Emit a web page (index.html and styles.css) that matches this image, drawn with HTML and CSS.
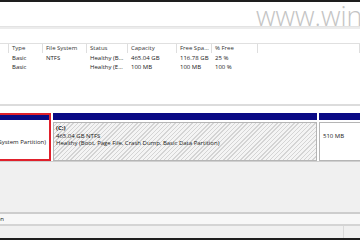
FILE: index.html
```html
<!DOCTYPE html>
<html lang="en">
<head>
    <meta charset="UTF-8">
    <title>Disk Management</title>
    <link rel="stylesheet" href="styles.css">
</head>
<body>
    <div class="topbar"></div>

    <div class="toolbar">
        <span class="watermark">www.windowscentral.com</span>
    </div>

    <div class="volumes">
        <div class="vol-row vol-head">
            <span></span>
            <span>Type</span>
            <span>File System</span>
            <span>Status</span>
            <span>Capacity</span>
            <span>Free Spa...</span>
            <span>% Free</span>
            <span></span>
        </div>
        <div class="vol-row">
            <span></span>
            <span>Basic</span>
            <span>NTFS</span>
            <span>Healthy (B...</span>
            <span>465.04 GB</span>
            <span>116.78 GB</span>
            <span>25 %</span>
            <span></span>
        </div>
        <div class="vol-row">
            <span></span>
            <span>Basic</span>
            <span></span>
            <span>Healthy (E...</span>
            <span>100 MB</span>
            <span>100 MB</span>
            <span>100 %</span>
            <span></span>
        </div>
    </div>

    <div class="disks">
        <div class="disk">
            <div class="part part-efi">
                <div class="part-bar"></div>
                <div class="part-body">
                    <p>Healthy (EFI System Partition)</p>
                </div>
            </div>
            <div class="part part-c">
                <div class="part-bar"></div>
                <div class="part-body">
                    <p><b>(C:)</b></p>
                    <p>465.04 GB NTFS</p>
                    <p>Healthy (Boot, Page File, Crash Dump, Basic Data Partition)</p>
                </div>
            </div>
            <div class="part part-rec">
                <div class="part-bar"></div>
                <div class="part-body">
                    <p>&nbsp;</p>
                    <p>510 MB</p>
                </div>
            </div>
        </div>
        <div class="disk-empty"></div>
        <div class="legend">
            <span class="legend-text">Primary partition</span>
        </div>
        <div class="statusbar">
            <span class="status-main"></span>
            <span class="status-side"></span>
        </div>
    </div>

    <div class="bottombar"></div>
</body>
</html>
```

FILE: styles.css
```css
body {
    margin: 0;
    width: 360px;
    height: 240px;
    overflow: hidden;
    background-color: #fff;
    font-family: "Open Sans", "Noto Sans", sans-serif;
    font-size: 6px;
    color: #1a1a1a;
}

.topbar,
.bottombar {
    height: 2px;
    background-color: #1e1e1e;
}

.toolbar {
    height: 24px;
    position: relative;
    overflow: hidden;
    border-bottom: 1px solid #e3e3e3;
}

.watermark {
    position: absolute;
    left: 256px;
    top: -5px;
    white-space: nowrap;
    font-weight: 300;
    font-size: 27px;
    color: #c4c4c4;
}

/* volume list */
.volumes {
    border-top: 2px solid #ececec;
    padding-top: 14px;
    height: 61px;
    border-bottom: 2px solid #dcdcdc;
}

.vol-row {
    display: grid;
    grid-template-columns: 9px 34px 44px 41px 49px 35px 46px 1fr;
    height: 9px;
    line-height: 9px;
    white-space: nowrap;
}

.vol-row span {
    padding-left: 3px;
    overflow: hidden;
}

.vol-head {
    border-top: 1px solid #e0e0e0;
    margin-bottom: 1px;
    color: #333;
}

.vol-head span {
    border-right: 1px solid #dedede;
}

/* disk map */
.disks {
    padding-top: 7px;
}

.disk {
    display: flex;
    height: 48px;
}

.part {
    display: flex;
    flex-direction: column;
    margin-right: 2px;
}

.part-bar {
    height: 7px;
    background-color: #0a0a85;
}

.part-body {
    flex: 1;
    margin-top: 2px;
    padding: 2px 3px;
    border: 1px solid #b5b5b5;
}

.part-body p {
    margin: 0;
    line-height: 7.5px;
    white-space: nowrap;
}

.part-efi {
    width: 51px;
    border: 2px solid #e0202b;
    border-left: none;
    box-sizing: border-box;
}

.part-efi .part-bar {
    height: 5px;
}

.part-efi .part-body {
    border: none;
    margin-top: 0;
    overflow: hidden;
    direction: rtl;
    padding-top: 19px;
}

.part-c {
    width: 264px;
}

.part-c .part-body {
    padding-left: 2px;
    background: repeating-linear-gradient(-45deg, #f4f4f4 0, #f4f4f4 2px, #d4d4d4 2px, #d4d4d4 3px);
}

.part-rec {
    flex: 1;
    margin-right: 0;
}

.part-rec .part-body {
    border-right: none;
}

.disk-empty {
    height: 50px;
    border-top: 1px solid #cfcfcf;
    border-bottom: 2px solid #cdcdcd;
    background-color: #f0f0f0;
}

.legend {
    height: 10px;
    line-height: 10px;
    background-color: #f7f7f7;
    border-bottom: 2px solid #d4d4d4;
}

.legend-text {
    display: inline-block;
    width: 4px;
    overflow: hidden;
    direction: rtl;
    white-space: nowrap;
}

.statusbar {
    display: flex;
    height: 12px;
    background-color: #f0f0f0;
}

.status-main {
    width: 343px;
    border-right: 1px solid #dadada;
}
```
